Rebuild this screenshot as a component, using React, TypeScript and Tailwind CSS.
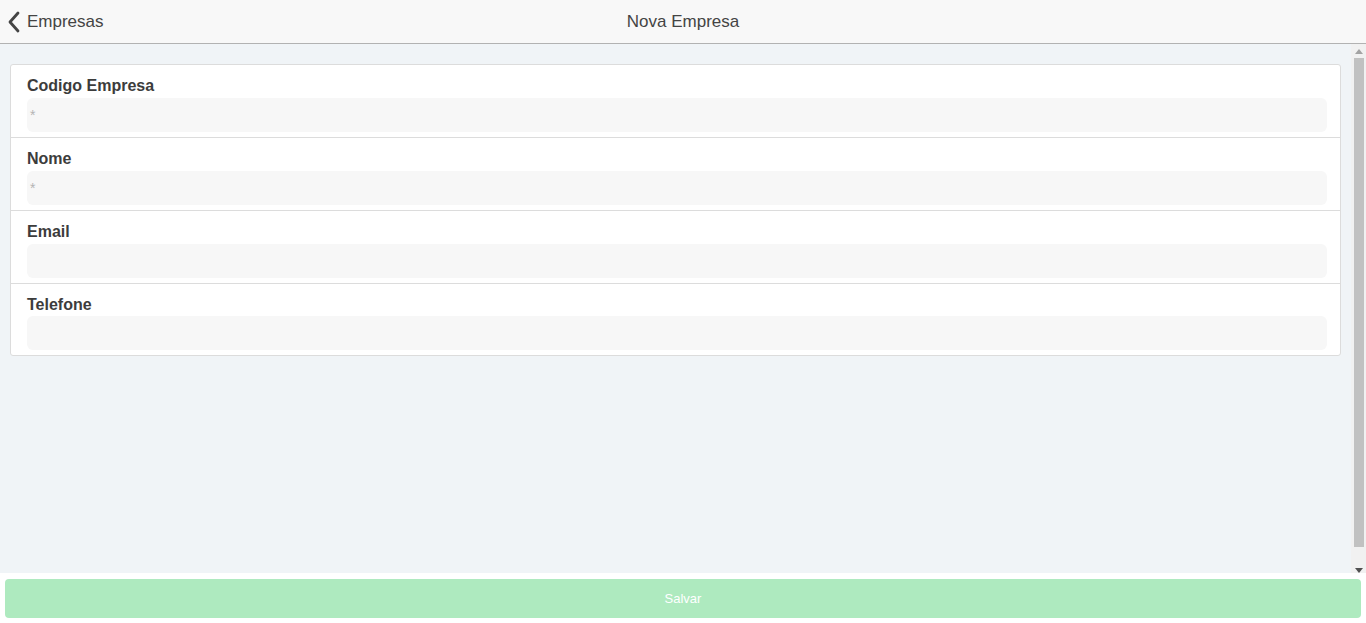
import React from 'react';

const fields = [
  { label: 'Codigo Empresa', placeholder: '*' },
  { label: 'Nome', placeholder: '*' },
  { label: 'Email', placeholder: '' },
  { label: 'Telefone', placeholder: '' },
];

const App = () => {
  return (
    <div className="h-[623px] w-[1366px] flex flex-col overflow-hidden bg-white font-['Liberation_Sans',Arial,sans-serif]">
      {/* header */}
      <div className="h-[44px] shrink-0 bg-[#f8f8f8] border-b border-[#b2b2b2] flex items-center relative">
        <button className="flex items-center gap-[6px] pl-[7px] text-[#444] text-[17px]">
          <svg width="14" height="22" viewBox="0 0 14 22" fill="none">
            <path d="M11 2 L3 11 L11 20" stroke="#444" strokeWidth="2.8" strokeLinecap="round" strokeLinejoin="round" />
          </svg>
          <span>Empresas</span>
        </button>
        <div className="absolute left-0 right-0 text-center text-[17px] text-[#444] pointer-events-none">Nova Empresa</div>
      </div>

      {/* content */}
      <div className="h-[529px] shrink-0 flex bg-[#f0f4f7]">
        <div className="flex-1 pt-[20px] px-[10px]">
          <div className="bg-white border border-[#dcdcdc] rounded-[3px]">
            {fields.map((f, i) => {
              const last = i === fields.length - 1;
              return (
                <div
                  key={f.label}
                  className={
                    last
                      ? 'pl-[16px] pr-[13px] pt-[10px] pb-[5px]'
                      : 'pl-[16px] pr-[13px] pt-[10px] pb-[5px] border-b border-[#dcdcdc]'
                  }
                >
                  <div className={last ? 'h-[22px] text-[16px] font-bold text-[#3c3c3c] leading-[22px]' : 'h-[23px] text-[16px] font-bold text-[#3c3c3c] leading-[22px]'}>
                    {f.label}
                  </div>
                  <div className="h-[34px] bg-[#f7f7f7] rounded-[6px] flex items-center pl-[3px] text-[14px] text-[#b4b4b4]">
                    {f.placeholder}
                  </div>
                </div>
              );
            })}
          </div>
        </div>
        {/* scrollbar */}
        <div className="w-[15px] bg-[#f1f1f1] flex flex-col items-center">
          <div className="h-[14px] flex items-center justify-center">
            <svg width="8" height="5" viewBox="0 0 8 5"><path d="M0 5 L4 0 L8 5 Z" fill="#a3a3a3" /></svg>
          </div>
          <div className="w-[10px] h-[489px] bg-[#c1c1c1]" />
          <div className="flex-1 flex items-end justify-center pb-0">
            <svg width="8" height="5" viewBox="0 0 8 5"><path d="M0 0 L8 0 L4 5 Z" fill="#505050" /></svg>
          </div>
        </div>
      </div>

      {/* footer */}
      <div className="flex-1 bg-white px-[5px] pt-[6px] pb-[5px]">
        <button className="w-full h-[39px] rounded-[4px] bg-[#aeeabf] text-white text-[13px]">Salvar</button>
      </div>
    </div>
  );
};

export default App;
